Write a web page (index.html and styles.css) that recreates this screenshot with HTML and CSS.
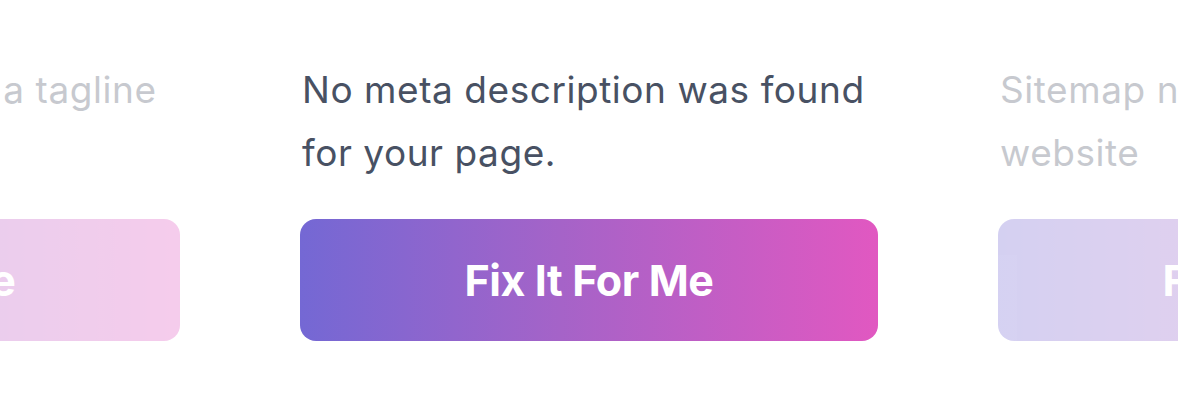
FILE: index.html
```html
<!DOCTYPE html>
<html lang="en">
<head>
<meta charset="utf-8">
<link rel="stylesheet" href="styles.css">
</head>
<body>
<div class="carousel">
  <div class="card faded">
    <p class="desc">Your homepage lacks a tagline for better SEO.</p>
    <button class="fix">Fix It For Me</button>
  </div>
  <div class="card">
    <p class="desc">No meta description was found for your page.</p>
    <button class="fix">Fix It For Me</button>
  </div>
  <div class="card faded">
    <p class="desc">Sitemap not found on your website</p>
    <button class="fix">Fix It For Me</button>
  </div>
</div>
</body>
</html>
```

FILE: styles.css
```css
html, body {
  margin: 0;
  padding: 0;
  background: #ffffff;
}
body {
  width: 1178px;
  height: 400px;
  overflow: hidden;
  font-family: Inter, "Noto Sans", sans-serif;
}
.carousel {
  display: flex;
  justify-content: center;
  gap: 120px;
  padding-top: 58px;
}
.card {
  flex: 0 0 578px;
  width: 578px;
  display: flex;
  flex-direction: column;
}
.card.faded {
  opacity: 0.3;
}
.desc {
  margin: 0 0 35px 2px;
  font-size: 37px;
  line-height: 63px;
  color: #485163;
  font-weight: 400;
  letter-spacing: 0.55px;
}
.fix {
  height: 122px;
  width: 578px;
  border: 0;
  border-radius: 16px;
  background: linear-gradient(90deg, #7468d4 0%, #a563c8 45%, #e158c1 100%);
  color: #ffffff;
  font-family: Inter, "Noto Sans", sans-serif;
  font-weight: 700;
  font-size: 43px;
  letter-spacing: -0.4px;
  padding: 0;
}
```
